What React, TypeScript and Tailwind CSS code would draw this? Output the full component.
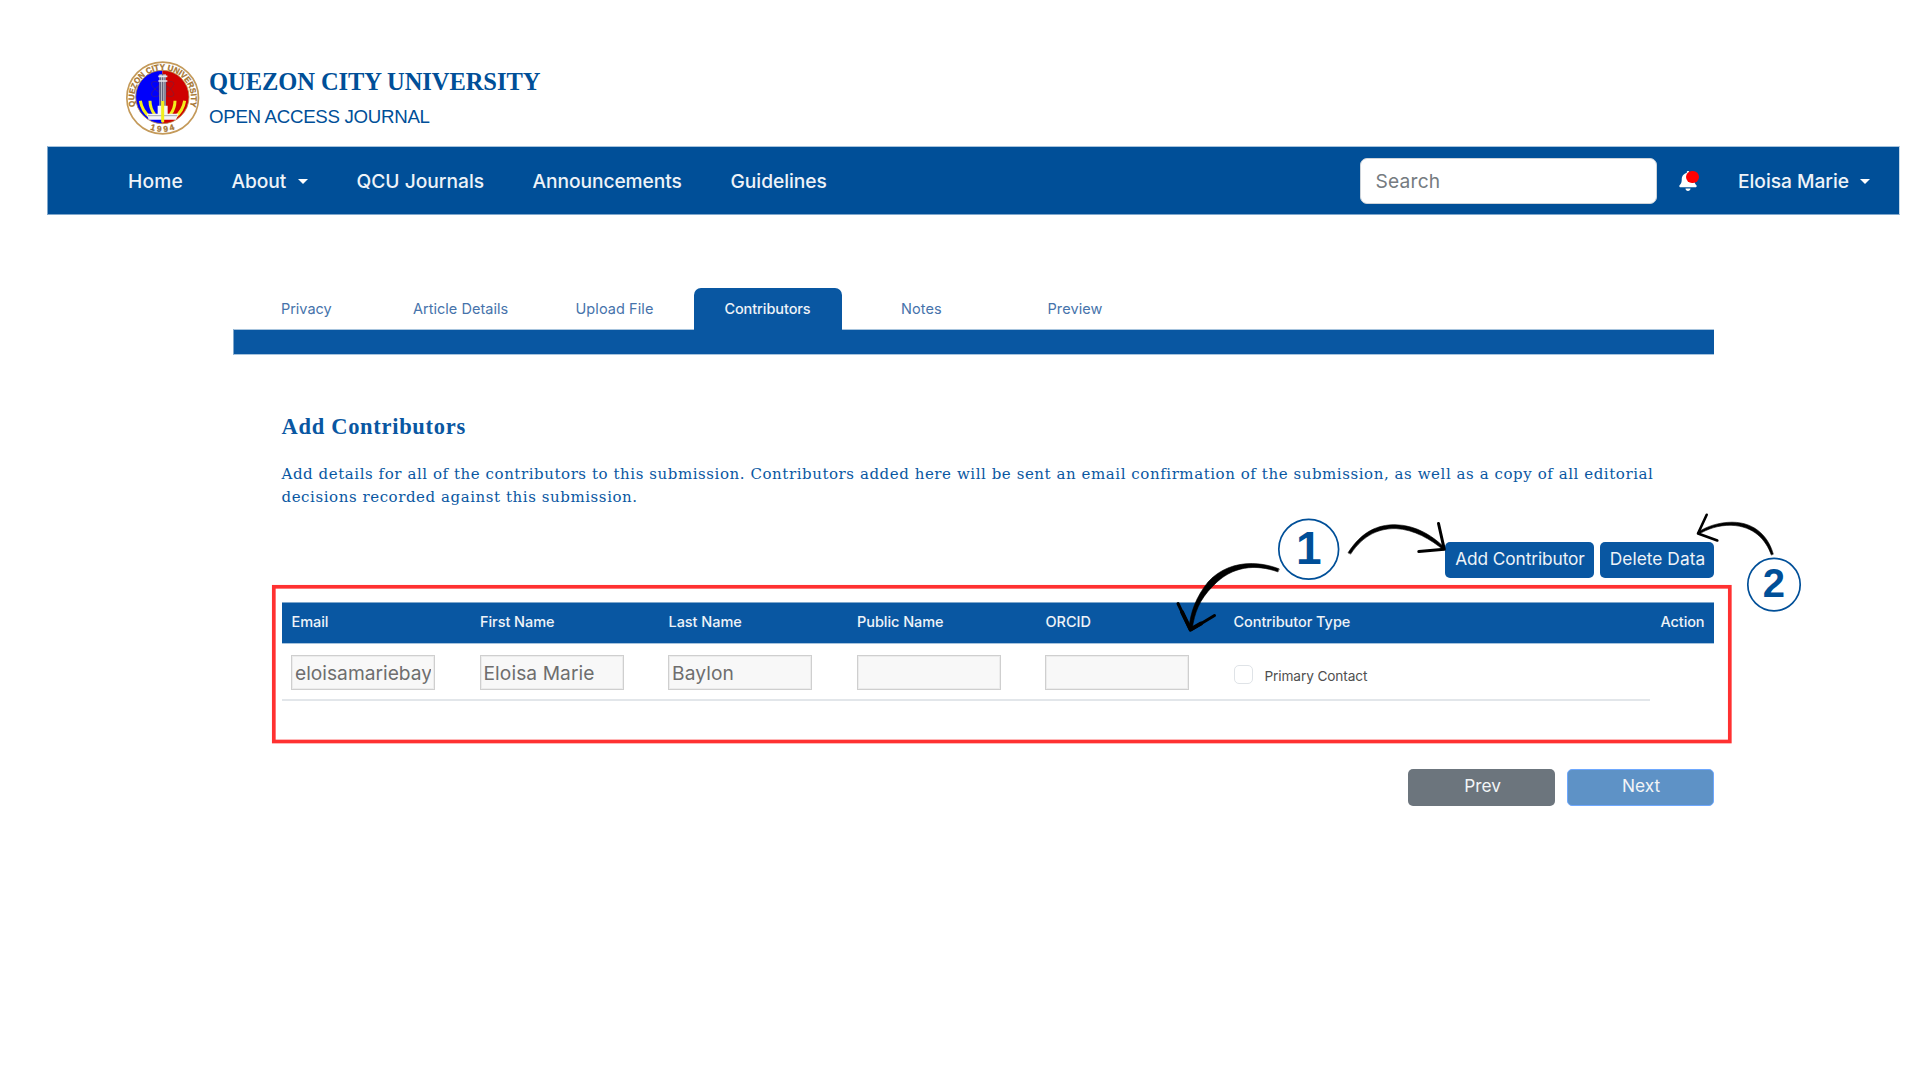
import { FaBell } from 'react-icons/fa';

const INTER = "font-['Inter',sans-serif]";

function Seal() {
  return (
    <svg viewBox="0 0 222 222" className="h-[74px] w-[74px] shrink-0" aria-label="Quezon City University seal">
      <defs>
        <path id="seal-top" d="M 28.500 136 A 85 85 0 1 1 191.500 136" />
        <path id="seal-bottom" d="M 44 188 A 101 101 0 0 0 176 188" />
      </defs>
      <circle cx="110" cy="111" r="107.500" fill="#fff" stroke="#c49a5a" strokeWidth="5" />
      <path d="M109 28 A80 80 0 0 0 109 188 Z" fill="#0000fb" />
      <path d="M109 28 A80 80 0 0 1 109 188 Z" fill="#cf0000" />
      <circle cx="109" cy="108" r="80" fill="none" stroke="#b98c4b" strokeWidth="2.500" />
      <g fill="none" stroke="#5a2a50" strokeWidth="2" opacity="0.6">
        <ellipse cx="110" cy="84" rx="38" ry="14" transform="rotate(30 110 84)" />
        <ellipse cx="110" cy="84" rx="38" ry="14" transform="rotate(-30 110 84)" />
        <ellipse cx="110" cy="84" rx="12" ry="36" />
      </g>
      <rect x="100" y="40" width="20" height="112" fill="#b9b9c4" />
      <path d="M103 46V150M110 38V150M117 46V150" stroke="#55556e" strokeWidth="3" />
      <path d="M97 46H124M97 60H124" stroke="#e5e5ea" strokeWidth="5" />
      <g fill="none" stroke="#f2ee1c" strokeWidth="9">
        <path d="M43 119Q48 150 72 168" />
        <path d="M72 119Q72 142 86 160" />
        <path d="M176 119Q171 150 147 168" />
        <path d="M147 119Q147 142 133 160" />
      </g>
      <path d="M95 134H125V158H158L150 176H68L62 158H95Z" fill="#f4f4f6" />
      <path d="M66 164H154" stroke="#a8a8b4" strokeWidth="3" />
      <path d="M110 120V184" stroke="#f2ee1c" strokeWidth="9" />
      <g fill="#a5742f" stroke="#a5742f" strokeWidth="0.8" fontFamily="Liberation Sans, sans-serif" fontWeight="700">
        <text fontSize="25">
          <textPath href="#seal-top" textLength="316" lengthAdjust="spacingAndGlyphs">
            QUEZON CITY UNIVERSITY
          </textPath>
        </text>
        <text fontSize="25" textAnchor="middle" letterSpacing="7">
          <textPath href="#seal-bottom" startOffset="52%">
            1994
          </textPath>
        </text>
      </g>
    </svg>
  );
}

function Caret({ className }: { className: string }) {
  return (
    <span
      className={`h-0 w-0 border-x-[5.500px] border-t-[5.500px] border-x-transparent border-t-white ${className}`}
    />
  );
}

const tabs = [
  { label: 'Privacy', box: 'w-[132px]', tone: 'text-[#4673ab] tracking-[-0.04px]' },
  { label: 'Article Details', box: 'w-[162.500px]', tone: 'text-[#4673ab] tracking-[0.02px]' },
  { label: 'Upload File', box: 'w-[118.500px]', tone: 'text-[#4673ab] tracking-[0.07px]' },
];

const fields = [
  { head: 'Email', value: 'eloisamariebay', track: 'tracking-[0px]' },
  { head: 'First Name', value: 'Eloisa Marie', track: 'tracking-[0.08px]' },
  { head: 'Last Name', value: 'Baylon', track: 'tracking-[0.1px]' },
  { head: 'Public Name', value: '', track: '' },
  { head: 'ORCID', value: '', track: '' },
];

function Annotations() {
  return (
    <svg
      viewBox="0 0 1920 1080"
      className="pointer-events-none absolute left-0 top-0 h-[1080px] w-[1920px]"
      fill="none"
      stroke="#000"
      strokeLinecap="round"
      strokeLinejoin="round"
    >
      <rect x="273.800" y="586.800" width="1456" height="154.700" stroke="#ff3131" strokeWidth="3.700" strokeLinejoin="miter" />

      <g fill="#000" strokeWidth="0.600">
        <path d="M1278.900 568.800C1258 560.500 1228 560 1208 582C1196 597 1190.500 612 1188.900 629L1192.200 629C1194.500 613 1199 600 1213 586C1232 565.500 1256 564 1277.700 571.800Z" />
        <path d="M1348.200 552.500C1362 531 1378 524.700 1395 524.700C1417 525 1434 537 1445 548L1443.500 550C1431 539.500 1414 529.500 1396 528.600C1380 528.300 1364 534 1350.800 553.800Z" />
        <path d="M1771.200 554.700C1766 540 1754 526 1731 525.300C1719 525 1707 529 1698.500 534.500L1697.500 532.500C1706 526.500 1719 522.200 1732 522.200C1756 522.200 1769 538 1773.200 553.900Z" />
      </g>
      <path d="M1178 603.500L1190.500 630L1214.500 615.500" strokeWidth="3" />
      <path d="M1182 612L1190.500 629.500L1201 623.500" strokeWidth="4" />
      <path d="M1438.500 523.500L1444.300 549.300L1418.800 551.500" strokeWidth="3" />
      <path d="M1706.700 514.800L1698 533.500L1717.300 540.500" strokeWidth="2.600" />

      <circle cx="1308.700" cy="549.200" r="29.900" fill="#fff" stroke="#004f98" strokeWidth="1.700" />
      <circle cx="1774" cy="584.600" r="26.200" fill="#fff" stroke="#004f98" strokeWidth="1.700" />
      <g
        fill="#004f98"
        stroke="none"
        textAnchor="middle"
        fontFamily="Liberation Sans, sans-serif"
        fontWeight="700"
      >
        <text x="1308.700" y="564" fontSize="46">1</text>
        <text x="1773.800" y="597" fontSize="40">2</text>
      </g>
    </svg>
  );
}

export default function App() {
  return (
    <div className={`relative h-[1080px] w-[1920px] overflow-hidden bg-white ${INTER}`}>
      <header className="flex h-[146px] pl-[125.500px] pt-[61px]">
        <Seal />
        <div className="ml-[9.500px] text-[#004f98]">
          <h1 className="mt-[6.500px] whitespace-nowrap font-['Liberation_Serif',serif] text-[24.500px] font-bold leading-[28px] tracking-[-0.06px]">
            QUEZON CITY UNIVERSITY
          </h1>
          <p className="mt-[7px] whitespace-nowrap font-['Liberation_Sans',sans-serif] text-[18.700px] leading-[28px] tracking-[-0.3px]">
            OPEN ACCESS JOURNAL
          </p>
        </div>
      </header>

      <nav className="ml-[47px] flex h-[69px] w-[1853px] items-center border border-b-[#7fa7cc] border-l-[#7fa7cc] border-r-[#c5d8e8] border-t-[#a6c3dd] bg-[#004f98] pl-[80px] text-[19.200px] font-medium leading-[24px] text-[#eef3f8]">
        <a className="w-[103.500px] tracking-[0.2px]">Home</a>
        <a className="flex w-[125px] items-center tracking-[-0.1px]">
          About <Caret className="ml-[11.500px] mt-[1px]" />
        </a>
        <a className="w-[176px]">QCU Journals</a>
        <a className="w-[198px] tracking-[-0.08px]">Announcements</a>
        <a className="tracking-[-0.03px]">Guidelines</a>
        <div className="ml-auto flex items-center">
          <div className="flex h-[46px] w-[297px] items-center rounded-[7px] border border-[#ced4da] bg-white pl-[15px] font-normal tracking-[0.2px] text-[#757b80]">
            Search
          </div>
          <div className="relative ml-[21px] h-[20px] w-[20px]">
            <FaBell className="h-[20px] w-[20px] text-white" />
            <span className="absolute left-[8.500px] top-0 h-[12.500px] w-[12.500px] rounded-full bg-[#ff0000]" />
          </div>
          <a className="ml-[40.500px] flex w-[161px] items-center tracking-[-0.03px]">
            Eloisa Marie <Caret className="ml-[10.500px] mt-[1px]" />
          </a>
        </div>
      </nav>

      <main className="ml-[233px] mt-[73px] w-[1481px]">
        <div className="flex h-[41px] items-center pl-[48px] text-[14.500px] leading-[20px]">
          {tabs.map((t) => (
            <a key={t.label} className={`whitespace-nowrap pt-px ${t.box} ${t.tone}`}>
              {t.label}
            </a>
          ))}
          <a className="flex h-[41px] w-[148px] items-center justify-center rounded-t-[7px] bg-[#0957a2] pr-[1px] font-medium tracking-[-0.08px] text-[#eef3f8]">
            Contributors
          </a>
          <a className="ml-[59px] w-[146.500px] pt-px tracking-[0.1px] text-[#4673ab]">Notes</a>
          <a className="pt-px tracking-[0.1px] text-[#4673ab]">Preview</a>
        </div>
        <div className="h-[26px] border border-r-0 border-b-[#a6c3dd] border-l-[#7fa7cc] border-t-[#a6c3dd] bg-[#0957a2]">
          <div className="-mt-px ml-[460px] h-[2px] w-[148px] bg-[#0957a2]" />
        </div>

        <section className="ml-[48.500px] text-[#0957a2]">
          <h2 className="mt-[58px] font-['Liberation_Serif',serif] text-[22.500px] font-bold leading-[28px] tracking-[0.7px]">
            Add Contributors
          </h2>
          <p className="mt-[22px] whitespace-nowrap font-['DejaVu_Serif',serif] text-[15px] leading-[23px] tracking-[0.565px]">
            Add details for all of the contributors to this submission. Contributors added here will be sent an
            email confirmation of the submission, as well as a copy of all editorial
            <br />
            decisions recorded against this submission.
          </p>
        </section>

        <div className="mt-[33px] flex justify-end gap-[6px] text-[17.300px] text-[#eef3f8]">
          <button className="flex h-[36px] w-[149px] justify-center whitespace-nowrap rounded-[5px] bg-[#0957a2] pl-px pt-[5px] leading-[24px] tracking-[-0.1px]">
            Add Contributor
          </button>
          <button className="flex h-[36px] w-[114px] justify-center whitespace-nowrap rounded-[5px] bg-[#0957a2] pl-px pt-[5px] leading-[24px] tracking-[0.05px]">
            Delete Data
          </button>
        </div>

        <div className="ml-[49px] mt-[24px] h-[141px]">
          <div className="flex h-[42px] border-b border-t border-b-[#a6c3dd] border-t-[#7fa7cc] bg-[#0957a2] pl-[9.500px] pt-[8px] text-[14.500px] font-medium leading-[22px] tracking-[-0.05px] text-[#eef3f8]">
            {fields.map((f) => (
              <span key={f.head} className="w-[188.500px]">
                {f.head}
              </span>
            ))}
            <span className="-ml-[0.500px]">Contributor Type</span>
            <span className="ml-auto pr-[9.500px] tracking-[-0.1px]">Action</span>
          </div>
          <div className="flex h-[57px] w-[1368px] border-b-2 border-[#e2e6ea] pl-[9px] pt-[11px]">
            {fields.map((f) => (
              <div key={f.head} className="w-[188.500px]">
                <input
                  readOnly
                  value={f.value}
                  className={`block h-[35px] w-[144px] border border-[#cfcfcf] bg-[#f8f8f8] px-[3px] text-[19.200px] text-[#6e6e6e] shadow-[inset_0_0_0_1px_#ececec] outline-none ${f.track}`}
                />
              </div>
            ))}
            <span className="mt-[10px] h-[19px] w-[19px] rounded-[5px] border border-[#dfe3e7] bg-white" />
            <span className="ml-[12px] mt-[11px] text-[13.700px] leading-[20px] tracking-[-0.14px] text-[#4f4f4f]">
              Primary Contact
            </span>
          </div>
        </div>

        <div className="mt-[26px] flex justify-end gap-[12px] text-[17.300px] text-[#f3f5f7]">
          <button className="h-[37px] w-[147px] rounded-[5px] bg-[#6c757d] pb-[3px] pl-[2px] leading-[24px]">Prev</button>
          <button className="h-[37px] w-[147px] rounded-[5px] border border-[#6ea8fe] bg-[#5e92c6] pb-[3px] pl-[1px] leading-[24px]">
            Next
          </button>
        </div>
      </main>

      <Annotations />
    </div>
  );
}
